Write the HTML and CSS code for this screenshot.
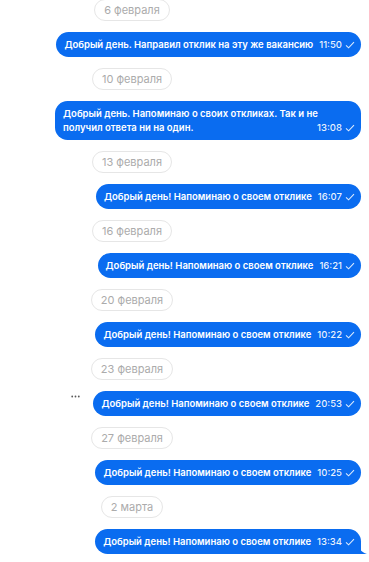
FILE: index.html
```html
<!DOCTYPE html>
<html lang="ru">
<head>
<meta charset="utf-8">
<link rel="stylesheet" href="styles.css">
</head>
<body>
<div class="chat">
  <div class="date-row"><span class="date">6 февраля</span></div>
  <div class="msg-row"><div class="bubble">Добрый день. Направил отклик на эту же вакансию<span class="meta">11:50<svg class="check" viewBox="0 0 10 8"><path d="M1 4.3 L3.6 6.8 L9 1.2"/></svg></span></div></div>
  <div class="date-row"><span class="date">10 февраля</span></div>
  <div class="msg-row"><div class="bubble">Добрый день. Напоминаю о своих откликах. Так и не получил ответа ни на один.<span class="meta">13:08<svg class="check" viewBox="0 0 10 8"><path d="M1 4.3 L3.6 6.8 L9 1.2"/></svg></span></div></div>
  <div class="date-row"><span class="date">13 февраля</span></div>
  <div class="msg-row"><div class="bubble">Добрый день! Напоминаю о своем отклике<span class="meta">16:07<svg class="check" viewBox="0 0 10 8"><path d="M1 4.3 L3.6 6.8 L9 1.2"/></svg></span></div></div>
  <div class="date-row"><span class="date">16 февраля</span></div>
  <div class="msg-row"><div class="bubble">Добрый день! Напоминаю о своем отклике<span class="meta">16:21<svg class="check" viewBox="0 0 10 8"><path d="M1 4.3 L3.6 6.8 L9 1.2"/></svg></span></div></div>
  <div class="date-row"><span class="date">20 февраля</span></div>
  <div class="msg-row"><div class="bubble">Добрый день! Напоминаю о своем отклике<span class="meta">10:22<svg class="check" viewBox="0 0 10 8"><path d="M1 4.3 L3.6 6.8 L9 1.2"/></svg></span></div></div>
  <div class="date-row"><span class="date">23 февраля</span></div>
  <div class="msg-row"><svg class="more" viewBox="0 0 9 3"><circle cx="1.2" cy="1.5" r="0.9"/><circle cx="4.5" cy="1.5" r="0.9"/><circle cx="7.8" cy="1.5" r="0.9"/></svg><div class="bubble">Добрый день! Напоминаю о своем отклике<span class="meta">20:53<svg class="check" viewBox="0 0 10 8"><path d="M1 4.3 L3.6 6.8 L9 1.2"/></svg></span></div></div>
  <div class="date-row"><span class="date">27 февраля</span></div>
  <div class="msg-row"><div class="bubble">Добрый день! Напоминаю о своем отклике<span class="meta">10:25<svg class="check" viewBox="0 0 10 8"><path d="M1 4.3 L3.6 6.8 L9 1.2"/></svg></span></div></div>
  <div class="date-row"><span class="date">2 марта</span></div>
  <div class="msg-row"><div class="bubble bubble-last">Добрый день! Напоминаю о своем отклике<span class="meta">13:34<svg class="check" viewBox="0 0 10 8"><path d="M1 4.3 L3.6 6.8 L9 1.2"/></svg></span><svg class="tail" viewBox="0 0 8 10"><path d="M0 0 C0 5 2 8 8 10 L0 10 Z"/></svg></div></div>
</div>
</body>
</html>
```
FILE: styles.css
```css
html, body {
  margin: 0;
  padding: 0;
  background: #ffffff;
}
body {
  font-family: Inter, "Noto Sans", sans-serif;
  overflow: hidden;
}
.chat {
  display: flex;
  flex-direction: column;
  gap: 11px;
  margin-top: -1px;
  padding-right: 8px;
}
.date-row {
  width: 264px;
  display: flex;
  justify-content: center;
}
.date {
  box-sizing: border-box;
  height: 22px;
  line-height: 20px;
  padding: 0 9px;
  border: 1px solid #e6e6e6;
  border-radius: 11px;
  font-size: 11px;
  color: #ababab;
  white-space: nowrap;
}
.msg-row {
  display: flex;
  justify-content: flex-end;
  align-items: flex-start;
}
.more {
  width: 9px;
  height: 3px;
  fill: #5a5a5a;
  margin-right: 13px;
  margin-top: 4px;
}
.bubble {
  position: relative;
  box-sizing: border-box;
  max-width: 306px;
  padding: 5.5px 6px 5.5px 8px;
  background: #0a6cf0;
  color: #ffffff;
  border-radius: 12.5px;
  font-size: 9.5px;
  font-weight: 600;
  line-height: 14px;
}
.meta {
  float: right;
  display: flex;
  align-items: center;
  gap: 3px;
  margin-left: 6px;
  font-size: 9.5px;
  font-weight: 500;
  color: rgba(255, 255, 255, 0.92);
}
.check {
  width: 10px;
  height: 8px;
  fill: none;
  stroke: rgba(255, 255, 255, 0.85);
  stroke-width: 1.1;
}
.bubble-last {
  border-bottom-right-radius: 0;
}
.tail {
  position: absolute;
  right: -6px;
  bottom: 0;
  width: 8px;
  height: 10px;
  fill: #0a6cf0;
}
```
